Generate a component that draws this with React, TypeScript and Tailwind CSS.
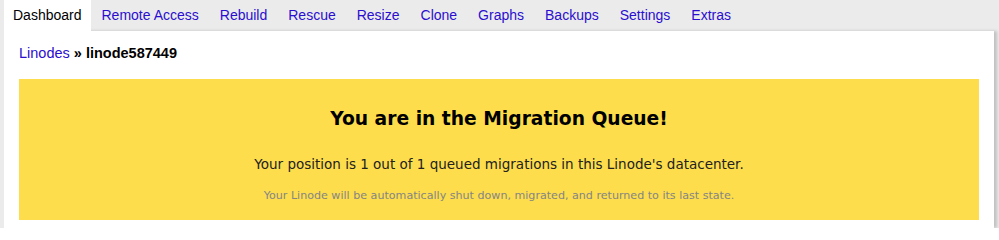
import React from 'react';

const tabs = ['Dashboard', 'Remote Access', 'Rebuild', 'Rescue', 'Resize', 'Clone', 'Graphs', 'Backups', 'Settings', 'Extras'];

const App: React.FC = () => {
  return (
    <div className="min-h-[228px] bg-[#ebebeb] pl-[4px] pr-[5px] font-['Liberation_Sans',Arial,sans-serif]">
      {/* Tabs */}
      <div className="flex h-[31px] items-stretch">
        {tabs.map((tab, i) => (
          <a
            key={tab}
            href="#"
            className={`flex items-center px-[9px] text-[14px] ${i === 0 ? 'mr-[2px] bg-white text-black' : 'mr-[3px] text-[#2a0ed0]'}`}
          >
            {tab}
          </a>
        ))}
      </div>

      {/* Panel */}
      <div className="h-[197px] bg-white px-[15px] pt-[13px] shadow-[3px_0_3px_rgba(0,0,0,0.18)]">
        <div className="text-[14.5px] leading-[18px]">
          <a href="#" className="text-[#2a0ed0]">Linodes</a>
          <span className="font-bold text-black"> » linode587449</span>
        </div>

        <div className="mt-[17px] flex h-[141px] flex-col items-center bg-[#fddd4b] pt-[26px] font-['DejaVu_Sans',Verdana,sans-serif]">
          <h1 className="text-[18.7px] font-bold leading-[28px] text-black">You are in the Migration Queue!</h1>
          <p className="mt-[22px] text-[13.5px] leading-[18px] text-[#222]">
            Your position is 1 out of 1 queued migrations in this Linode's datacenter.
          </p>
          <p className="mt-[16px] text-[11.1px] leading-[14px] text-[#858585]">
            Your Linode will be automatically shut down, migrated, and returned to its last state.
          </p>
        </div>
      </div>
    </div>
  );
};

export default App;
